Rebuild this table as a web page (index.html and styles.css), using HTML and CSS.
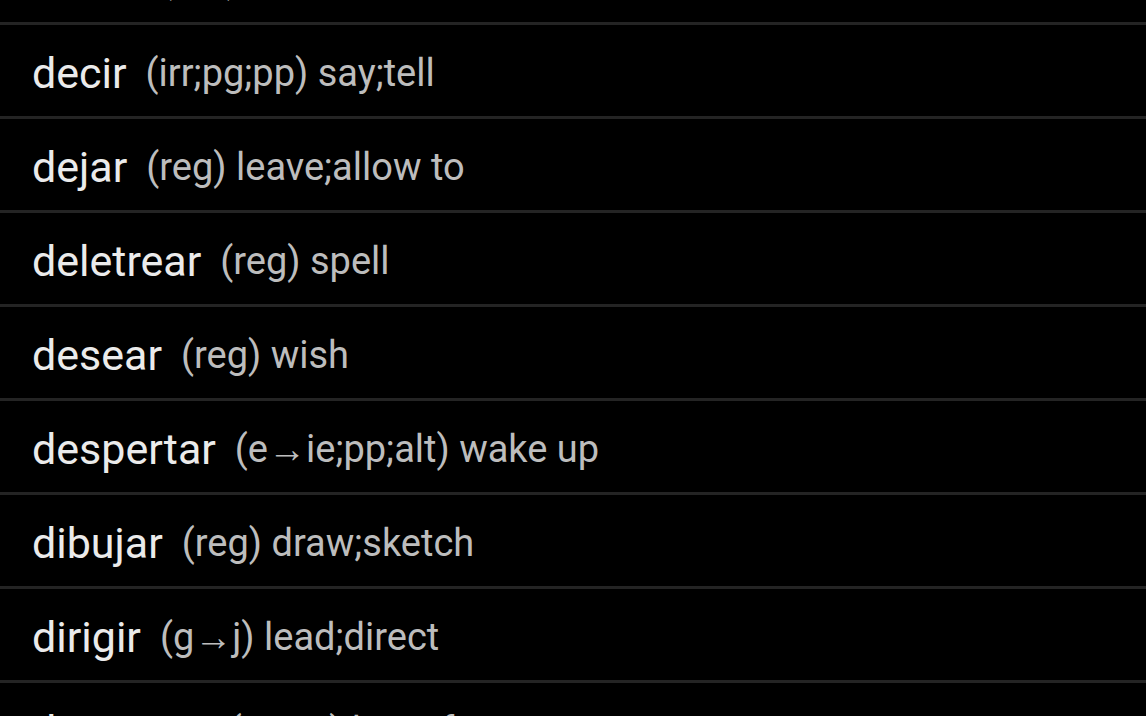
FILE: index.html
```html
<!DOCTYPE html>
<html lang="en">
<head>
    <meta charset="UTF-8">
    <meta name="viewport" content="width=device-width, initial-scale=1.0">
    <title>Verbs</title>
    <link rel="stylesheet" href="styles.css">
</head>
<body>
    <ul class="verb-list">
        <li class="verb"><span class="verb-word">deber</span><span class="verb-info">(reg) must;owe</span></li>
        <li class="verb"><span class="verb-word">decir</span><span class="verb-info">(irr;pg;pp) say;tell</span></li>
        <li class="verb"><span class="verb-word">dejar</span><span class="verb-info">(reg) leave;allow to</span></li>
        <li class="verb"><span class="verb-word">deletrear</span><span class="verb-info">(reg) spell</span></li>
        <li class="verb"><span class="verb-word">desear</span><span class="verb-info">(reg) wish</span></li>
        <li class="verb"><span class="verb-word">despertar</span><span class="verb-info">(e→ie;pp;alt) wake up</span></li>
        <li class="verb"><span class="verb-word">dibujar</span><span class="verb-info">(reg) draw;sketch</span></li>
        <li class="verb"><span class="verb-word">dirigir</span><span class="verb-info">(g→j) lead;direct</span></li>
        <li class="verb"><span class="verb-word">divertirse</span><span class="verb-info">(e→ie) have fun;enjoy</span></li>
    </ul>
</body>
</html>
```

FILE: styles.css
```css
* {
    box-sizing: border-box;
    margin: 0;
    padding: 0;
}

html, body {
    background-color: #000;
    overflow: hidden;
}

body {
    font-family: 'Roboto', sans-serif;
    color: #ebebeb;
}

.verb-list {
    list-style-type: none;
    margin-top: -69px;
}

.verb {
    height: 94px;
    padding: 4px 0 0 32px;
    border-bottom: 3px solid #242424;
    display: flex;
    align-items: center;
    white-space: nowrap;
}

.verb-word {
    font-size: 43px;
    color: #ebebeb;
}

.verb-info {
    font-size: 38px;
    color: #bdbdbd;
    margin-left: 19px;
}
```
